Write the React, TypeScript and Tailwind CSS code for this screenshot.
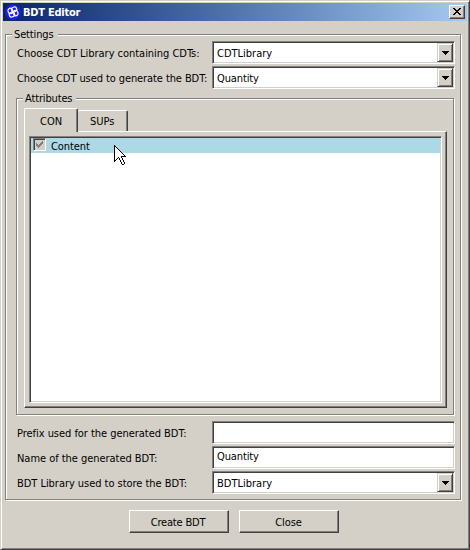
import React from "react";

const sunken =
  "border border-t-[#808080] border-l-[#808080] border-r-white border-b-white shadow-[inset_1px_1px_0_#404040,inset_-1px_-1px_0_#d4d0c8]";
const raised =
  "bg-[#d4d0c8] border border-t-white border-l-white border-r-[#404040] border-b-[#404040] shadow-[inset_-1px_-1px_0_#808080]";
const etched =
  "border border-[#808080] shadow-[1px_1px_0_#fff,inset_1px_1px_0_#fff]";

// Arrow pointer, one string per pixel row: X is outline, o is fill.
const pointer = [
  "X",
  "XX",
  "XoX",
  "XooX",
  "XoooX",
  "XooooX",
  "XoooooX",
  "XooooooX",
  "XoooooooX",
  "XooooooooX",
  "XoooooooooX",
  "XooooooXXXXX",
  "XoooXooX",
  "XooX XooX",
  "XoX  XooX",
  "XX    XooX",
  "X     XooX",
  "       XooX",
  "       XooX",
  "        XX",
];

function Pointer() {
  return (
    <svg width="12" height="20" shapeRendering="crispEdges" className="absolute top-[145px] left-[114px]">
      {pointer.flatMap((row, y) =>
        row.split("").map((c, x) =>
          c === " " ? null : (
            <rect key={x + "-" + y} x={x} y={y} width="1" height="1" fill={c === "X" ? "#000" : "#fff"} />
          ),
        ),
      )}
    </svg>
  );
}

function Logo() {
  return (
    <svg width="16" height="16" viewBox="0 0 16 16" className="shrink-0">
      <circle cx="8" cy="8" r="7.8" fill="#1c1cf8" />
      <g fill="none" stroke="#fff" strokeWidth="1.3" transform="translate(8 8) scale(.86) translate(-8 -8)">
        <ellipse cx="9.2" cy="5" rx="3.2" ry="2.8" transform="rotate(-20 9.2 5)" />
        <ellipse cx="11" cy="9.2" rx="3.2" ry="2.8" transform="rotate(70 11 9.2)" />
        <ellipse cx="6.8" cy="11" rx="3.2" ry="2.8" transform="rotate(-20 6.8 11)" />
        <ellipse cx="5" cy="6.8" rx="3.2" ry="2.8" transform="rotate(70 5 6.8)" />
      </g>
    </svg>
  );
}

function Field({ label, labelClass, value = "", valueClass = "", combo = false }: {
  label: string; labelClass: string; value?: string; valueClass?: string; combo?: boolean;
}) {
  return (
    <div className="flex h-[23px]">
      <span className={"w-[195px] shrink-0 leading-[25px] " + labelClass}>{label}</span>
      <div className={"flex w-[243px] justify-between bg-white p-px " + sunken}>
        <span className={"pl-[3px] " + (combo ? "leading-[21px] " : "leading-[17px] ") + valueClass}>{value}</span>
        {combo && (
          <div className="h-[19px] w-4 shrink-0 border border-t-[#d4d0c8] border-l-[#d4d0c8] border-r-[#404040] border-b-[#404040] bg-[#d4d0c8] shadow-[inset_1px_1px_0_#fff,inset_-1px_-1px_0_#808080]">
            <svg width="14" height="17" shapeRendering="crispEdges" className="block">
              <path d="M4 7h7v1H4zM5 8h5v1H5zM6 9h3v1H6zM7 10h1v1H7z" />
            </svg>
          </div>
        )}
      </div>
    </div>
  );
}

export default function App() {
  return (
    <div className="flex h-[550px] w-[470px] flex-col overflow-hidden border border-t-[#d4d0c8] border-l-[#d4d0c8] border-r-[#404040] border-b-[#404040] bg-[#d4d0c8] p-[2px] font-['DejaVu_Sans_Condensed','DejaVu_Sans',sans-serif] text-[11px] whitespace-nowrap text-black shadow-[inset_1px_1px_0_#fff,inset_-1px_-1px_0_#808080]">
      <div className="flex h-[18px] shrink-0 items-center bg-linear-to-r from-[#0a246a] to-[#a6caf0] pr-[2px] pl-[2px]">
        <Logo />
        <span className="ml-[2px] leading-[19px] font-bold tracking-[-0.25px] text-white">BDT Editor</span>
        <div className={"ml-auto h-[14px] w-4 " + raised}>
          <svg width="14" height="12" shapeRendering="crispEdges" className="block">
            <path d="M3 2h2v1H3zM9 2h2v1H9zM4 3h2v1H4zM8 3h2v1H8zM5 4h4v1H5zM6 5h2v1H6zM5 6h4v1H5zM4 7h2v1H4zM8 7h2v1H8zM3 8h2v1H3zM9 8h2v1H9z" />
          </svg>
        </div>
      </div>

      <div className={"mt-[13px] ml-[2px] h-[466px] w-[456px] shrink-0 pl-[11px] " + etched}>
        <div className="-mt-2 -ml-[5px] h-[14px] w-[46px] bg-[#d4d0c8] pl-[2px] leading-[15px] tracking-[-0.15px]">Settings</div>
        <div className="flex flex-col gap-[2px]">
          <Field combo label="Choose CDT Library containing CDTs:" labelClass="tracking-[-0.03px]" value="CDTLibrary" />
          <Field combo label="Choose CDT used to generate the BDT:" labelClass="tracking-[-0.09px]" value="Quantity" valueClass="tracking-[-0.12px]" />
        </div>

        <div className={"mt-[9px] -ml-px h-[317px] w-[438px] pl-[7px] " + etched}>
          <div className="-mt-2 -ml-px h-[15px] w-[53px] bg-[#d4d0c8] pl-[2px] leading-[15px] tracking-[-0.15px]">Attributes</div>
          <div className="relative z-10 flex h-[25px] items-end pt-[2px]">
            <div className="relative -mb-px h-[24px] w-[54px] shrink-0 rounded-t-[2px] border border-t-white border-l-white border-r-[#404040] border-b-0 bg-[#d4d0c8] pl-[15px] leading-[26px] shadow-[inset_-1px_0_0_#808080]">CON</div>
            <div className="h-[21px] w-[50px] shrink-0 rounded-t-[2px] border border-t-white border-l-0 border-r-[#404040] border-b-0 pl-[12px] leading-[22px] shadow-[inset_-1px_0_0_#808080]">SUPs</div>
          </div>
          <div className={"h-[277px] w-[423px] pt-1 pl-1 " + raised}>
            <div className={"h-[267px] w-[413px] bg-white p-px " + sunken}>
              <div className="flex h-[15px] items-start bg-[#add8e6]">
                <div className="ml-[2px] h-[13px] w-[13px] shrink-0 border border-t-[#808080] border-l-[#808080] border-r-white border-b-white bg-[#d4d0c8] shadow-[inset_1px_1px_0_#404040]">
                  <svg width="11" height="11" shapeRendering="crispEdges" className="block">
                    <path fill="#808080" d="M2 4h1v3H2zM3 5h1v3H3zM4 6h1v3H4zM5 5h1v3H5zM6 4h1v3H6zM7 3h1v3H7zM8 2h1v3H8z" />
                  </svg>
                </div>
                <span className="ml-[5px] pt-[2px] leading-[13px] tracking-[-0.1px]">Content</span>
              </div>
            </div>
          </div>
        </div>

        <div className="mt-[6px] flex flex-col gap-[2px]">
          <Field label="Prefix used for the generated BDT:" labelClass="tracking-[-0.04px]" />
          <Field label="Name of the generated BDT:" labelClass="tracking-[-0.04px]" value="Quantity" valueClass="tracking-[-0.12px]" />
          <Field combo label="BDT Library used to store the BDT:" labelClass="tracking-[-0.04px]" value="BDTLibrary" />
        </div>
      </div>

      <div className="mt-[10px] ml-[126px] flex gap-[10px]">
        <div className={"h-[23px] w-[100px] pr-[2px] text-center leading-[24px] tracking-[-0.18px] " + raised}>Create BDT</div>
        <div className={"h-[23px] w-[100px] pr-px text-center leading-[24px] tracking-[-0.1px] " + raised}>Close</div>
      </div>

      <Pointer />
    </div>
  );
}
